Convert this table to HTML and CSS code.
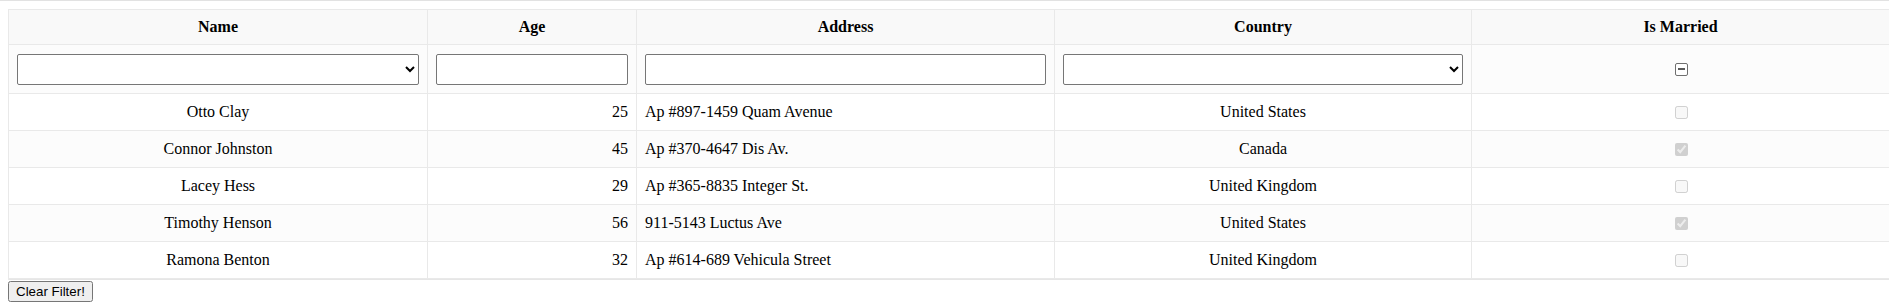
FILE: index.html
```html
<!DOCTYPE html>
<html lang="en">
<head>
<meta charset="utf-8">
<title>Grid</title>
<link rel="stylesheet" href="styles.css">
</head>
<body>
<div class="topline"></div>
<main class="page">
  <div class="grid">
    <div class="grid-header">
      <div class="row header-row">
        <div class="cell center">Name</div>
        <div class="cell center">Age</div>
        <div class="cell center">Address</div>
        <div class="cell center">Country</div>
        <div class="cell center">Is Married</div>
      </div>
      <div class="row filter-row">
        <div class="cell"><select class="field"><option></option></select></div>
        <div class="cell"><input class="field" type="text"></div>
        <div class="cell"><input class="field" type="text"></div>
        <div class="cell"><select class="field"><option></option></select></div>
        <div class="cell center"><input class="cb cb-indeterminate" type="checkbox" aria-checked="mixed"></div>
      </div>
    </div>
    <div class="grid-body">
      <div class="row data-row">
        <div class="cell center">Otto Clay</div>
        <div class="cell right">25</div>
        <div class="cell left">Ap #897-1459 Quam Avenue</div>
        <div class="cell center">United States</div>
        <div class="cell center"><input class="cb" type="checkbox" disabled></div>
      </div>
      <div class="row data-row alt">
        <div class="cell center">Connor Johnston</div>
        <div class="cell right">45</div>
        <div class="cell left">Ap #370-4647 Dis Av.</div>
        <div class="cell center">Canada</div>
        <div class="cell center"><input class="cb" type="checkbox" checked disabled></div>
      </div>
      <div class="row data-row">
        <div class="cell center">Lacey Hess</div>
        <div class="cell right">29</div>
        <div class="cell left">Ap #365-8835 Integer St.</div>
        <div class="cell center">United Kingdom</div>
        <div class="cell center"><input class="cb" type="checkbox" disabled></div>
      </div>
      <div class="row data-row alt">
        <div class="cell center">Timothy Henson</div>
        <div class="cell right">56</div>
        <div class="cell left">911-5143 Luctus Ave</div>
        <div class="cell center">United States</div>
        <div class="cell center"><input class="cb" type="checkbox" checked disabled></div>
      </div>
      <div class="row data-row">
        <div class="cell center">Ramona Benton</div>
        <div class="cell right">32</div>
        <div class="cell left">Ap #614-689 Vehicula Street</div>
        <div class="cell center">United Kingdom</div>
        <div class="cell center"><input class="cb" type="checkbox" disabled></div>
      </div>
    </div>
  </div>
  <button class="clear-btn" type="button">Clear Filter!</button>
</main>
</body>
</html>
```

FILE: styles.css
```css
html, body {
  margin: 0;
  padding: 0;
  background: #fff;
}

body {
  font-family: "Liberation Serif", "Times New Roman", serif;
  font-size: 16px;
  color: #000;
  overflow: hidden;
}

.topline {
  height: 1px;
  background: #e2e2e2;
}

.page {
  padding: 8px 0 0 8px;
}

.grid {
  width: 1881px;
  box-sizing: border-box;
  border-left: 1px solid #e9e9e9;
  border-top: 1px solid #e9e9e9;
}

.grid-header {
  background: #f9f9f9;
}

.grid-body {
  border-bottom: 1px solid #e6e6e6;
}

.row {
  display: grid;
  grid-template-columns: 419px 209px 418px 417px 417px;
}

.cell {
  box-sizing: border-box;
  display: flex;
  align-items: center;
  padding: 0 8px;
  border-right: 1px solid #e9e9e9;
  border-bottom: 1px solid #e9e9e9;
  min-width: 0;
  white-space: nowrap;
}

.cell:last-child {
  border-right: none;
}

.center { justify-content: center; }
.right { justify-content: flex-end; }
.left { justify-content: flex-start; }

.header-row .cell {
  height: 35px;
  font-weight: bold;
  background: #f9f9f9;
}

.filter-row .cell {
  height: 49px;
  background: #fcfcfc;
}

.data-row .cell {
  height: 37px;
  background: #fff;
}

.data-row.alt .cell {
  background: #fcfcfc;
}

.field {
  box-sizing: border-box;
  width: 100%;
  height: 31px;
  margin: 0;
  font-family: "Liberation Serif", "Times New Roman", serif;
  font-size: 16px;
  background: #fff;
  border: 1px solid #767676;
  border-radius: 2px;
}

.cb {
  margin: 3px 3px 3px 4px;
}

.cb-indeterminate {
  -webkit-appearance: none;
  appearance: none;
  box-sizing: border-box;
  width: 13px;
  height: 13px;
  border: 1px solid #6f6f6f;
  border-radius: 2px;
  background: #fff linear-gradient(#5a5a5a, #5a5a5a) center / 7px 2px no-repeat;
}

.clear-btn {
  display: block;
  margin: 1px 0 0 0;
  font-family: "Liberation Sans", Arial, sans-serif;
  font-size: 13.3333px;
}
```
